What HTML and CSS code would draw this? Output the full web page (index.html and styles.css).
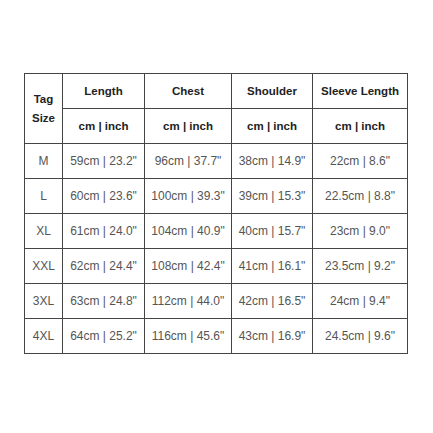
FILE: index.html
```html
<!DOCTYPE html>
<html>
<head>
<meta charset="utf-8">
<link rel="stylesheet" href="styles.css">
</head>
<body>
<div class="page">
<table class="size-table">
  <colgroup>
    <col class="c1"><col class="c2"><col class="c3"><col class="c4"><col class="c5">
  </colgroup>
  <thead>
    <tr>
      <th rowspan="2" class="tag">Tag<br>Size</th>
      <th>Length</th>
      <th>Chest</th>
      <th>Shoulder</th>
      <th>Sleeve Length</th>
    </tr>
    <tr>
      <th>cm | inch</th>
      <th>cm | inch</th>
      <th>cm | inch</th>
      <th>cm | inch</th>
    </tr>
  </thead>
  <tbody>
    <tr><td>M</td><td>59cm | 23.2"</td><td>96cm | 37.7"</td><td>38cm | 14.9"</td><td>22cm | 8.6"</td></tr>
    <tr><td>L</td><td>60cm | 23.6"</td><td>100cm | 39.3"</td><td>39cm | 15.3"</td><td>22.5cm | 8.8"</td></tr>
    <tr><td>XL</td><td>61cm | 24.0"</td><td>104cm | 40.9"</td><td>40cm | 15.7"</td><td>23cm | 9.0"</td></tr>
    <tr><td>XXL</td><td>62cm | 24.4"</td><td>108cm | 42.4"</td><td>41cm | 16.1"</td><td>23.5cm | 9.2"</td></tr>
    <tr><td>3XL</td><td>63cm | 24.8"</td><td>112cm | 44.0"</td><td>42cm | 16.5"</td><td>24cm | 9.4"</td></tr>
    <tr><td>4XL</td><td>64cm | 25.2"</td><td>116cm | 45.6"</td><td>43cm | 16.9"</td><td>24.5cm | 9.6"</td></tr>
  </tbody>
</table>
</div>
</body>
</html>
```
FILE: styles.css
```css
html, body {
  margin: 0;
  padding: 0;
  background: #ffffff;
}
.page {
  padding: 73px 0 0 24px;
}
.size-table {
  border-collapse: collapse;
  table-layout: fixed;
  width: 383px;
  font-family: "Liberation Sans", Arial, sans-serif;
  border: 1px solid #222;
}
.c1 { width: 38px; }
.c2 { width: 82px; }
.c3 { width: 87px; }
.c4 { width: 81px; }
.c5 { width: 95px; }
.size-table th,
.size-table td {
  border: 1px solid #444;
  height: 35px;
  padding: 0;
  text-align: center;
  vertical-align: middle;
  box-sizing: border-box;
  white-space: nowrap;
}
.size-table th {
  font-size: 11.5px;
  font-weight: bold;
  color: #222;
}
.size-table th.tag {
  line-height: 19px;
}
.size-table td {
  font-size: 12px;
  color: #555;
}
```
